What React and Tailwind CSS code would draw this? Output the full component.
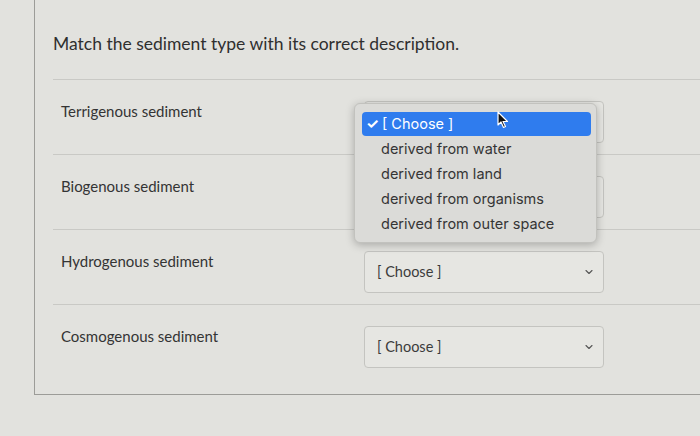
import { ChevronDown } from "lucide-react";

const rows = [
  { label: "Terrigenous sediment", hidden: true },
  { label: "Biogenous sediment", hidden: true },
  { label: "Hydrogenous sediment", hidden: false },
  { label: "Cosmogenous sediment", hidden: false },
];

const options = [
  "derived from water",
  "derived from land",
  "derived from organisms",
  "derived from outer space",
];

function Select({ hidden }) {
  return (
    <div className="w-[240px] h-[42px] border border-[#c4c4c0] rounded-[4px] bg-[#e6e6e2] flex items-center justify-between pl-[12px] pr-[8px]">
      <span className={hidden ? "invisible" : "text-[14.5px] text-[#3b3b3b]"}>
        [ Choose ]
      </span>
      <ChevronDown size={12} strokeWidth={2.2} className="text-[#555]" />
    </div>
  );
}

export default function App() {
  return (
    <div
      className="relative w-[700px] h-[436px] overflow-hidden bg-[#e2e2de]"
      style={{ fontFamily: "Lato, 'Open Sans', sans-serif" }}
    >
      <div className="ml-[34px] w-[720px] h-[395px] border-l border-b border-[#9c9c98] pl-[18px] pt-[32px]">
        <h2 className="text-[17.5px] leading-[24px] text-[#2f2f2f] mb-[23px]">
          Match the sediment type with its correct description.
        </h2>

        {rows.map((r) => (
          <div
            key={r.label}
            className="h-[75px] border-t border-[#c9c9c5] pt-[21px] pl-[8px] flex"
          >
            <div className="w-[303px] text-[15px] leading-[20px] text-[#343434]">
              {r.label}
            </div>
            <Select hidden={r.hidden} />
          </div>
        ))}
      </div>

      {/* open dropdown menu */}
      <div
        className="absolute left-[354px] top-[103px] w-[243px] h-[140px] rounded-[6px] bg-[#dbdbd8] shadow-[0_2px_8px_rgba(0,0,0,0.25)] border border-[#c2c2be] pl-[7px] pr-[5px] pt-[8px]"
        style={{ fontFamily: "Inter, 'Liberation Sans', sans-serif" }}
      >
        <div className="h-[24px] rounded-[4px] bg-[#2f7cee] flex items-center pl-[4px] text-white text-[14.5px]">
          <span className="w-[16px] font-bold">✓</span>
          <span>[ Choose ]</span>
        </div>
        <div className="pl-[19px]">
          {options.map((o) => (
            <div key={o} className="h-[25px] leading-[25px] text-[14.5px] text-[#353535]">
              {o}
            </div>
          ))}
        </div>
      </div>

      {/* mouse cursor */}
      <svg
        className="absolute left-[497px] top-[111px]"
        width="12"
        height="18"
        viewBox="0 0 12 18"
      >
        <path
          d="M1 1 L1 14 L4 11 L6.5 16.5 L8.5 15.5 L6 10.5 L10.5 10.5 Z"
          fill="#111"
          stroke="#fff"
          strokeWidth="1.2"
          strokeLinejoin="round"
        />
      </svg>
    </div>
  );
}
